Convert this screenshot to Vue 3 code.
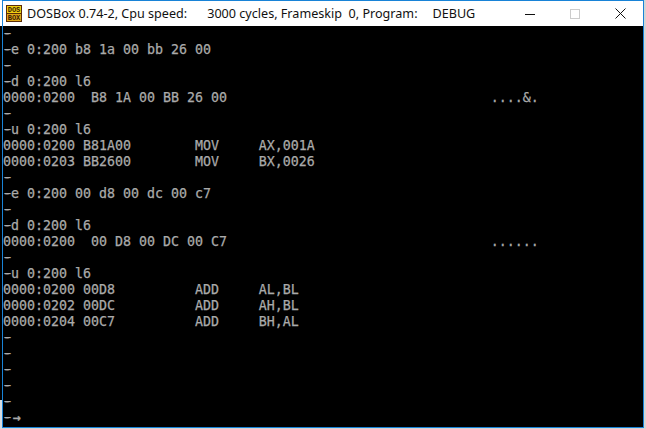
<script setup>
const cycles = '3000 cycles, Frameskip  0, Program:'
const rows = [
  '-',
  '-e 0:200 b8 1a 00 bb 26 00',
  '-',
  '-d 0:200 l6',
  '0000:0200  B8 1A 00 BB 26 00                                 ....&.',
  '-',
  '-u 0:200 l6',
  '0000:0200 B81A00        MOV     AX,001A',
  '0000:0203 BB2600        MOV     BX,0026',
  '-',
  '-e 0:200 00 d8 00 dc 00 c7',
  '-',
  '-d 0:200 l6',
  '0000:0200  00 D8 00 DC 00 C7                                 ......',
  '-',
  '-u 0:200 l6',
  '0000:0200 00D8          ADD     AL,BL',
  '0000:0202 00DC          ADD     AH,BL',
  '0000:0204 00C7          ADD     BH,AL',
  '-',
  '-',
  '-',
  '-',
  '-',
  '-→',
].map((t) => (t[0] === '-' ? { dash: '-', rest: t.slice(1) } : { dash: '', rest: t }))
</script>

<template>
  <div class="page">
    <div class="window">
      <header class="titlebar">
        <svg class="logo" viewBox="0 0 16 17" width="16" height="17">
          <rect width="16" height="17" fill="#5a2c08" />
          <rect x="1" y="1" width="14" height="7" fill="#f0d010" />
          <rect x="1" y="9" width="14" height="7" fill="#e0a818" />
          <text x="8" y="6.800" class="logo-text">DOS</text>
          <text x="8" y="14.800" class="logo-text">BOX</text>
        </svg>
        <span class="title">DOSBox 0.74-2, Cpu speed:</span>
        <span class="title cycles">{{ cycles }}</span>
        <span class="title prog">DEBUG</span>
        <div class="controls">
          <svg width="10" height="10" viewBox="0 0 10 10"><path d="M0 5.500h10" stroke="#111" /></svg>
          <svg width="10" height="10" viewBox="0 0 10 10"><rect x=".5" y=".5" width="9" height="9" fill="none" stroke="#ccc" /></svg>
          <svg width="11" height="11" viewBox="0 0 11 11"><path d="M.5.500l10 10M10.500.500l-10 10" stroke="#111" fill="none" /></svg>
        </div>
      </header>
      <main class="screen">
        <div v-for="(r, i) in rows" :key="i" class="row"><span v-if="r.dash" class="dash">{{ r.dash }}</span><span :class="{ arrow: r.rest === '→' }">{{ r.rest }}</span></div>
      </main>
    </div>
  </div>
</template>

<style>
html, body { margin: 0; background: #000; }
</style>

<style scoped>
.page {
  width: 646px;
  height: 429px;
  padding-left: 2px;
  box-sizing: border-box;
  background:
    linear-gradient(#d4d4d4, #d4d4d4) right / 2px 100% no-repeat,
    linear-gradient(#fff 0 26px, #000 26px 400px, #d8dde2 400px) left / 2px 100% no-repeat,
    #d4d4d4;
}
.window {
  width: 642px;
  height: 428px;
  box-sizing: border-box;
  border: 1px solid #1883d7;
  background: #000;
  display: flex;
  flex-direction: column;
  overflow: hidden;
}
.titlebar {
  height: 25px;
  flex: none;
  background: #fff;
  display: flex;
  align-items: center;
  font: 12.6px "Noto Sans", sans-serif;
  color: #111;
}
.logo { margin-left: 3px; margin-right: 5px; }
.logo-text {
  font: bold 7px "Liberation Mono", monospace;
  text-anchor: middle;
  fill: #3a1c04;
}
.title { white-space: pre; }
.cycles { margin-left: 20px; }
.prog { margin-left: 15px; }
.controls {
  margin-left: auto;
  display: flex;
  align-items: center;
  gap: 35px;
  padding-right: 17px;
}
.screen {
  flex: 1;
  background: #000;
  color: #aaa;
  font: 13.29px/16px "DejaVu Sans Mono", monospace;
  -webkit-text-stroke: 0.25px #aaa;
}
.row { height: 16px; white-space: pre; }
.dash { text-shadow: 2px 0 #aaa, -1px 0 #aaa; }
.arrow { font-weight: bold; padding-left: 2px; }
</style>
